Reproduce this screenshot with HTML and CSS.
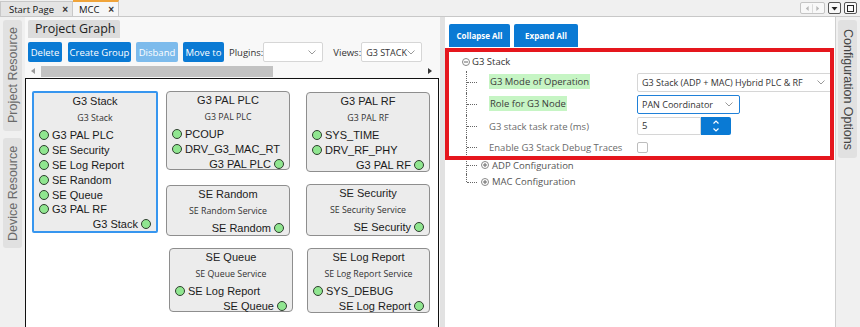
FILE: index.html
```html
<!DOCTYPE html>
<html lang="en">
<head>
    <meta charset="UTF-8">
    <meta name="viewport" content="width=device-width, initial-scale=1.0">
    <title>MCC | Project Graph</title>

    <link rel="stylesheet" href="styles.css">
</head>
<body>

    <!-- Document tabs -->
    <div class="tabbar">
        <div class="doc-tab">Start Page <span class="close">×</span></div>
        <div class="doc-tab active">MCC <span class="close">×</span></div>

        <div class="win-btns">
            <div class="win-btn pair">
                <svg width="24" height="11" viewBox="0 0 24 11"><path d="M8 3 L5 5.5 L8 8 Z M16 3 L19 5.5 L16 8 Z" fill="#b8b8b8"/><line x1="12" y1="1" x2="12" y2="10" stroke="#d8d8d8"/></svg>
            </div>
            <div class="win-btn dark">
                <svg width="11" height="11" viewBox="0 0 11 11"><path d="M2.5 4 L8.5 4 L5.5 7.5 Z" fill="#222"/></svg>
            </div>
            <div class="win-btn dark">
                <svg width="11" height="11" viewBox="0 0 11 11"><rect x="2.5" y="2.5" width="6" height="6" fill="none" stroke="#222"/></svg>
            </div>
        </div>
    </div>

    <div class="main">

        <!-- Left dock -->
        <div class="side-bar left">
            <div class="side-tab project">Project Resource</div>
            <div class="side-tab device">Device Resource</div>
        </div>

        <!-- Project graph -->
        <div class="graph-panel">
            <div class="panel-tab">Project Graph</div>

            <div class="toolbar">
                <button class="btn b-delete">Delete</button>
                <button class="btn b-group">Create Group</button>
                <button class="btn b-disband disabled">Disband</button>
                <button class="btn b-move">Move to</button>
                <span class="tb-label">Plugins:</span>
                <div class="select plugins">
                    <span></span>
                    <svg width="8" height="5" viewBox="0 0 8 5"><polyline points="0.5,0.5 4,4 7.5,0.5" fill="none" stroke="#999"/></svg>
                </div>
                <span class="tb-label views-label">Views:</span>
                <div class="select views">
                    <span>G3 STACK</span>
                    <svg width="8" height="5" viewBox="0 0 8 5"><polyline points="0.5,0.5 4,4 7.5,0.5" fill="none" stroke="#999"/></svg>
                </div>
            </div>

            <div class="hscroll">
                <svg width="4" height="6" viewBox="0 0 4 6"><path d="M4 0 L0 3 L4 6 Z" fill="#999"/></svg>
                <div class="thumb"></div>
                <svg class="right-arrow" width="4" height="6" viewBox="0 0 4 6"><path d="M0 0 L4 3 L0 6 Z" fill="#333"/></svg>
            </div>

            <div class="canvas">
                <div class="gnode selected n-stack">
                    <div class="g-title">G3 Stack</div>
                    <div class="g-sub">G3 Stack</div>
                    <div class="port"><span class="dot"></span>G3 PAL PLC</div>
                    <div class="port"><span class="dot"></span>SE Security</div>
                    <div class="port"><span class="dot"></span>SE Log Report</div>
                    <div class="port"><span class="dot"></span>SE Random</div>
                    <div class="port"><span class="dot"></span>SE Queue</div>
                    <div class="port"><span class="dot"></span>G3 PAL RF</div>
                    <div class="port out">G3 Stack<span class="dot"></span></div>
                </div>

                <div class="gnode n-plc">
                    <div class="g-title">G3 PAL PLC</div>
                    <div class="g-sub">G3 PAL PLC</div>
                    <div class="port"><span class="dot"></span>PCOUP</div>
                    <div class="port"><span class="dot"></span>DRV_G3_MAC_RT</div>
                    <div class="port out">G3 PAL PLC<span class="dot"></span></div>
                </div>

                <div class="gnode n-rf">
                    <div class="g-title">G3 PAL RF</div>
                    <div class="g-sub">G3 PAL RF</div>
                    <div class="port"><span class="dot"></span>SYS_TIME</div>
                    <div class="port"><span class="dot"></span>DRV_RF_PHY</div>
                    <div class="port out">G3 PAL RF<span class="dot"></span></div>
                </div>

                <div class="gnode n-random">
                    <div class="g-title">SE Random</div>
                    <div class="g-sub">SE Random Service</div>
                    <div class="port out">SE Random<span class="dot"></span></div>
                </div>

                <div class="gnode n-security">
                    <div class="g-title">SE Security</div>
                    <div class="g-sub">SE Security Service</div>
                    <div class="port out">SE Security<span class="dot"></span></div>
                </div>

                <div class="gnode n-queue">
                    <div class="g-title">SE Queue</div>
                    <div class="g-sub">SE Queue Service</div>
                    <div class="port"><span class="dot"></span>SE Log Report</div>
                    <div class="port out">SE Queue<span class="dot"></span></div>
                </div>

                <div class="gnode n-log">
                    <div class="g-title">SE Log Report</div>
                    <div class="g-sub">SE Log Report Service</div>
                    <div class="port"><span class="dot"></span>SYS_DEBUG</div>
                    <div class="port out">SE Log Report<span class="dot"></span></div>
                </div>
            </div>
        </div>

        <div class="splitter"></div>

        <!-- Configuration options -->
        <div class="config-panel">
            <div class="cfg-buttons">
                <button class="btn cfg">Collapse All</button>
                <button class="btn cfg">Expand All</button>
            </div>

            <div class="tree">
                <div class="tree-root">
                    <svg width="8" height="8" viewBox="0 0 8 8"><circle cx="4" cy="4" r="3.5" fill="none" stroke="#888"/><line x1="2" y1="4" x2="6" y2="4" stroke="#666"/></svg>
                    <span>G3 Stack</span>
                </div>

                <div class="tree-children">
                    <div class="tree-row">
                        <div class="lbl"><span class="hl">G3 Mode of Operation</span></div>
                        <div class="select wide">
                            <span>G3 Stack (ADP + MAC) Hybrid PLC &amp; RF</span>
                            <svg width="8" height="5" viewBox="0 0 8 5"><polyline points="0.5,0.5 4,4 7.5,0.5" fill="none" stroke="#999"/></svg>
                        </div>
                    </div>
                    <div class="tree-row">
                        <div class="lbl"><span class="hl">Role for G3 Node</span></div>
                        <div class="select role">
                            <span>PAN Coordinator</span>
                            <svg width="8" height="5" viewBox="0 0 8 5"><polyline points="0.5,0.5 4,4 7.5,0.5" fill="none" stroke="#999"/></svg>
                        </div>
                    </div>
                    <div class="tree-row">
                        <div class="lbl grey">G3 stack task rate (ms)</div>
                        <div class="spin">
                            <div class="spin-input">5</div>
                            <div class="spin-btn">
                                <svg width="8" height="14" viewBox="0 0 8 14"><polyline points="1.5,4.5 4,2 6.5,4.5" fill="none" stroke="#fff" stroke-width="1.2"/><polyline points="1.5,9.5 4,12 6.5,9.5" fill="none" stroke="#fff" stroke-width="1.2"/></svg>
                            </div>
                        </div>
                    </div>
                    <div class="tree-row short">
                        <div class="lbl grey">Enable G3 Stack Debug Traces</div>
                        <div class="checkbox"></div>
                    </div>
                    <div class="tree-row group">
                        <svg width="8" height="8" viewBox="0 0 8 8"><circle cx="4" cy="4" r="3.5" fill="none" stroke="#888"/><line x1="2" y1="4" x2="6" y2="4" stroke="#666"/><line x1="4" y1="2" x2="4" y2="6" stroke="#666"/></svg>
                        <span>ADP Configuration</span>
                    </div>
                    <div class="tree-row group last">
                        <svg width="8" height="8" viewBox="0 0 8 8"><circle cx="4" cy="4" r="3.5" fill="none" stroke="#888"/><line x1="2" y1="4" x2="6" y2="4" stroke="#666"/><line x1="4" y1="2" x2="4" y2="6" stroke="#666"/></svg>
                        <span>MAC Configuration</span>
                    </div>
                </div>
            </div>

            <!-- Highlight frame drawn over the G3 Stack settings -->
            <div class="highlight"></div>
        </div>

        <!-- Right dock -->
        <div class="side-bar right">
            <div class="side-tab config">Configuration Options</div>
        </div>
    </div>

</body>
</html>
```

FILE: styles.css
```css
* { margin: 0; padding: 0; box-sizing: border-box; }

body {
    width: 860px;
    height: 327px;
    overflow: hidden;
    background: #f0f0f0;
    font-family: "Open Sans", "Noto Sans", sans-serif;
    color: #333;
}

button { font-family: inherit; border: none; cursor: pointer; white-space: nowrap; }

/* Top document tabs */
.tabbar {
    height: 17px;
    display: flex;
    align-items: flex-end;
    border-bottom: 1px solid #c8c8c8;
}

.doc-tab {
    height: 15px;
    display: flex;
    align-items: center;
    padding: 0 4px 0 8px;
    font-size: 9.5px;
    color: #111;
    background: #e4e4e4;
    border: 1px solid #c8c8c8;
    border-bottom: none;
}

.doc-tab .close {
    margin-left: auto;
    font-family: "Liberation Sans", sans-serif;
    font-weight: bold;
    font-size: 10px;
    color: #333;
}

.doc-tab:first-child { width: 73px; }

.doc-tab.active {
    width: 46px;
    height: 16px;
    padding-left: 6px;
    background: #f6f6f6;
    border-top: 2px solid #f0a43a;
    border-left: none;
}

.win-btns {
    margin-left: auto;
    align-self: center;
    display: flex;
    gap: 3px;
    padding-right: 3px;
}

.win-btn {
    height: 12px;
    width: 13px;
    display: flex;
    align-items: center;
    justify-content: center;
    border: 1px solid #c4c4c4;
    border-radius: 2px;
    background: #f8f8f8;
}

.win-btn.pair { width: 25px; }
.win-btn.dark { border-color: #555; }

/* Main area */
.main {
    display: flex;
    height: 310px;
}

.side-bar {
    width: 25px;
    display: flex;
    flex-direction: column;
    gap: 7px;
    padding: 3px 3px 0;
    background: #f0f0f0;
}

.side-bar.right {
    border-left: 1px solid #cfcfcf;
    padding-left: 2px;
}

.side-tab {
    width: 19px;
    background: #e1e1e1;
    border-radius: 3px;
    font-family: "Liberation Sans", sans-serif;
    font-size: 12.5px;
    color: #6a6a6a;
    display: flex;
    align-items: center;
    justify-content: center;
    writing-mode: vertical-rl;
}

.side-tab.project { height: 111px; transform: rotate(180deg); }
.side-tab.device { height: 110px; transform: rotate(180deg); }
.side-tab.config { height: 138px; color: #444; }

/* Project graph */
.graph-panel {
    width: 415px;
    display: flex;
    flex-direction: column;
    background: #f8f8f8;
}

.panel-tab {
    margin: 3px 0 0 3px;
    width: 92px;
    height: 18px;
    padding-left: 7px;
    background: #dcdcdc;
    border-radius: 2px 2px 0 0;
    font-size: 12.5px;
    line-height: 18px;
    color: #222;
}

.toolbar {
    margin-top: 4px;
    padding-left: 3px;
    height: 20px;
    display: flex;
    align-items: center;
    gap: 5px;
}

.btn {
    height: 20px;
    padding: 0;
    background: #0a7ad4;
    color: #fff;
    font-size: 9.5px;
    border-radius: 2px;
}

.btn.disabled { background: #7dbbec; }

.b-delete { width: 34px; margin-right: 1px; }
.b-group { width: 63px; }
.b-disband { width: 42px; }
.b-move { width: 41px; }

.tb-label {
    font-size: 9.5px;
    color: #333;
    margin-right: -5px;
    white-space: nowrap;
}

.views-label { margin-left: 5px; }

.select {
    height: 20px;
    display: flex;
    align-items: center;
    justify-content: space-between;
    padding: 0 6px 0 4px;
    background: #fff;
    border: 1px solid #d6d6d6;
    border-radius: 2px;
    font-size: 9px;
    color: #333;
    white-space: nowrap;
}

.select.plugins { width: 60px; }
.select.views { width: 61px; }

.hscroll {
    margin: 3px 0 1px 3px;
    width: 410px;
    height: 12px;
    display: flex;
    align-items: center;
    padding-left: 3px;
}

.hscroll .thumb {
    margin-left: 6px;
    width: 232px;
    height: 11px;
    background: #c2c2c2;
}

.hscroll .right-arrow { margin-left: auto; margin-right: 6px; }

.canvas {
    flex: 1;
    width: 414px;
    position: relative;
    background: #fff;
    border: 1px solid #111;
    border-bottom: none;
}

.gnode {
    position: absolute;
    width: 124px;
    padding: 1px 5px 0;
    background: #ececec;
    border: 1px solid #8e8e8e;
    border-radius: 4px;
    font-family: "Liberation Sans", Arial, sans-serif;
    color: #1a1a1a;
}

.gnode.selected {
    border: 2px solid #3796ef;
    border-radius: 2px;
}

.g-title {
    text-align: center;
    font-size: 11px;
    line-height: 15px;
    color: #222;
}

.g-sub {
    text-align: center;
    font-family: "Open Sans", sans-serif;
    font-size: 8.8px;
    line-height: 19px;
    color: #333;
    white-space: nowrap;
}

.port {
    display: flex;
    align-items: center;
    gap: 3px;
    height: 14.8px;
    font-size: 11px;
    white-space: nowrap;
}

.port.out { justify-content: flex-end; }

.dot {
    width: 10px;
    height: 10px;
    border-radius: 50%;
    background: #90e690;
    border: 1px solid #2f3f2f;
    flex-shrink: 0;
}

/* node places on the canvas */
.n-stack { left: 6px; top: 12px; width: 126px; height: 142px; }
.n-plc { left: 140px; top: 12px; height: 79px; }
.n-rf { left: 280px; top: 13px; height: 80px; }
.n-random { left: 140px; top: 106px; height: 51px; }
.n-security { left: 280px; top: 105px; height: 52px; }
.n-queue { left: 143px; top: 169px; height: 64px; }
.n-log { left: 281px; top: 169px; width: 123px; height: 65px; }

.splitter {
    width: 5px;
    background: #e2e2e2;
}

/* Configuration panel */
.config-panel {
    width: 390px;
    position: relative;
    background: #fff;
}

.cfg-buttons {
    display: flex;
    gap: 4px;
    padding: 7px 0 0 4px;
}

.btn.cfg {
    height: 23px;
    font-size: 8px;
    font-weight: bold;
    border-radius: 2px 2px 0 0;
}

.btn.cfg:first-child { width: 61px; }
.btn.cfg:last-child { width: 64px; }

.tree {
    padding-left: 17px;
    font-size: 9.5px;
}

.tree-root {
    margin-top: 5px;
    height: 19px;
    display: flex;
    align-items: center;
    gap: 2px;
    color: #333;
}

.tree-children { margin-left: 4px; }

.tree-row {
    position: relative;
    height: 22px;
    display: flex;
    align-items: center;
    padding-left: 23px;
}

.tree-row.short { height: 20px; }
.tree-row.group { height: 16.5px; padding-left: 15px; gap: 3px; color: #555; }

.tree-row::before {
    content: "";
    position: absolute;
    left: 0;
    top: 0;
    bottom: 0;
    border-left: 1px dotted #666;
}

.tree-row.last::before { bottom: 50%; }

.tree-row::after {
    content: "";
    position: absolute;
    left: 1px;
    top: 50%;
    width: 10px;
    border-top: 1px dotted #666;
}

.lbl {
    width: 148px;
    color: #3a3a3a;
    white-space: nowrap;
}

.lbl .hl {
    background: #c6f5c4;
    padding: 1px 1px;
    line-height: 16px;
}

.lbl.grey { color: #6a6a6a; }

.select.wide { width: 195px; height: 19px; }
.select.role { width: 103px; height: 19px; border-color: #1f80d8; }

.spin { display: flex; }

.spin-input {
    width: 64px;
    height: 18px;
    padding-left: 4px;
    border: 1px solid #d6d6d6;
    border-radius: 2px 0 0 2px;
    line-height: 16px;
}

.spin-btn {
    width: 30px;
    height: 18px;
    background: #0a7ad4;
    border-radius: 0 2px 2px 0;
    display: flex;
    align-items: center;
    justify-content: center;
}

.checkbox {
    width: 11px;
    height: 11px;
    border: 1px solid #bdbdbd;
    border-radius: 2px;
}

.highlight {
    position: absolute;
    left: 0;
    top: 31px;
    width: 389px;
    height: 112px;
    border: 4px solid #e5161d;
}
```
